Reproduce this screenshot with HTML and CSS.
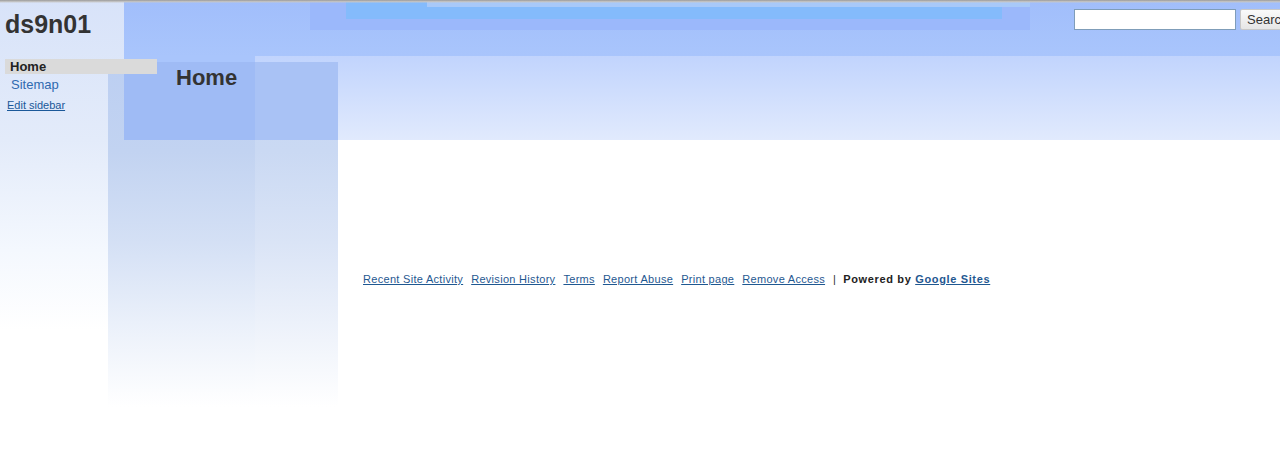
FILE: index.html
```html
<!DOCTYPE html>
<html>
<head>
<meta charset="utf-8">
<link rel="stylesheet" href="styles.css">
</head>
<body>
<div class="page">
  <div class="deco deco-side"></div>
  <div class="deco deco-head"></div>
  <div class="deco deco-head-top"></div>
  <div class="deco deco-sky"></div>
  <div class="deco deco-shine"></div>
  <div class="deco deco-band"></div>
  <div class="deco deco-col"></div>
  <div class="deco deco-col-a"></div>
  <div class="deco deco-col-b"></div>
  <div class="deco deco-topline"></div>

  <header class="header">
    <div class="site-title">ds9n01</div>
    <form class="search">
      <input class="search-input" type="text">
      <button class="search-btn" type="button">Search</button>
    </form>
  </header>

  <div class="main">
    <nav class="sidebar">
      <div class="nav-item nav-current">Home</div>
      <a class="nav-item nav-link" href="#">Sitemap</a>
      <a class="edit-sidebar" href="#">Edit sidebar</a>
    </nav>
    <div class="content">
      <h1 class="page-title">Home</h1>
      <div class="footer">
        <a href="#">Recent Site Activity</a>
        <a href="#">Revision History</a>
        <a href="#">Terms</a>
        <a href="#">Report Abuse</a>
        <a href="#">Print page</a>
        <a href="#">Remove Access</a>
        <span class="sep">|</span>
        <span class="powered">Powered by <a href="#">Google Sites</a></span>
      </div>
    </div>
  </div>
</div>
</body>
</html>
```

FILE: styles.css
```css
html, body {
  margin: 0;
  padding: 0;
  background: #ffffff;
}
.page {
  position: relative;
  width: 1280px;
  height: 462px;
  overflow: hidden;
  font-family: "Liberation Sans", Arial, sans-serif;
  color: #333333;
}
.deco {
  position: absolute;
}
.deco-side {
  left: 0; top: 0; width: 124px; height: 340px;
  background: linear-gradient(to bottom, #d8e3f9 0px, #e3ebfa 140px, #f4f8fe 250px, #ffffff 330px);
}
.deco-head {
  left: 124px; top: 0; width: 1156px; height: 56px;
  background: linear-gradient(to bottom, #a1befb 0px, #a9c5fc 56px);
}
.deco-head-top {
  left: 310px; top: 0; width: 720px; height: 30px;
  background: #9bb8fb;
}
.deco-sky {
  left: 346px; top: 0; width: 656px; height: 19px;
  background: #84bbfc;
}
.deco-shine {
  left: 427px; top: 2px; width: 603px; height: 5px;
  background: #a8c9f9;
}
.deco-band {
  left: 255px; top: 56px; width: 1025px; height: 84px;
  background: linear-gradient(to bottom, #c1d4fd, #e1eafd);
}
.deco-col {
  left: 124px; top: 56px; width: 131px; height: 6px;
  background: #a9c5fc;
}
.deco-col-a {
  left: 108px; top: 62px; width: 147px; height: 345px;
  background: linear-gradient(to bottom, #bccff2 0px, #c2d3f1 90px, #d4e0f5 180px, #eaf0fa 260px, #ffffff 345px);
}
.deco-col-a::before {
  content: "";
  position: absolute;
  left: 16px; top: 0; width: 131px; height: 78px;
  background: #9fbbf5;
}
.deco-col-b {
  left: 255px; top: 62px; width: 83px; height: 345px;
  background: linear-gradient(to bottom, #c6d7f4 0px, #cad9f3 90px, #dae4f6 180px, #ecf1fa 260px, #ffffff 345px);
}
.deco-col-b::before {
  content: "";
  position: absolute;
  left: 0; top: 0; width: 83px; height: 78px;
  background: #a9c2f5;
}
.deco-topline {
  left: 0; top: 0; width: 1280px; height: 3px;
  background: linear-gradient(to bottom, #9a9a9a, #c8c8c8 60%, rgba(200,200,200,0));
}

.header {
  position: relative;
  display: flex;
  justify-content: space-between;
  align-items: flex-start;
  height: 59px;
}
.site-title {
  margin: 10px 0 0 5px;
  font-size: 25px;
  font-weight: bold;
  line-height: 28px;
  color: #333333;
}
.search {
  display: flex;
  gap: 4px;
  margin: 9px 0 0 0;
}
.search-input {
  width: 160px;
  height: 19px;
  margin: 0;
  padding: 0;
  border: 1px solid #7f9db9;
  background: #ffffff;
}
.search-btn {
  margin: 0 -30px 0 0;
  width: 70px;
  height: 21px;
  padding: 0 0 0 6px;
  text-align: left;
  font-family: "Liberation Sans", Arial, sans-serif;
  font-size: 13px;
  color: #333;
  border: 1px solid #c8c8c8;
  border-radius: 2px;
  background: linear-gradient(to bottom, #fafafa, #e6e6e6);
}

.main {
  position: relative;
  display: flex;
}
.sidebar {
  width: 152px;
  margin-left: 5px;
  display: flex;
  flex-direction: column;
  align-items: flex-start;
}
.nav-item {
  display: block;
  font-size: 13px;
  line-height: 15px;
}
.nav-current {
  align-self: stretch;
  background: #dadada;
  font-weight: bold;
  padding-left: 5px;
  color: #222;
}
.nav-link {
  margin-top: 3px;
  padding-left: 6px;
  color: #2f6ab0;
  text-decoration: none;
}
.edit-sidebar {
  margin: 7px 0 0 2px;
  font-size: 11px;
  line-height: 13px;
  color: #1a5899;
}
.content {
  position: relative;
  padding-left: 19px;
  flex: 1;
}
.page-title {
  margin: 6px 0 0 0;
  font-size: 22px;
  line-height: 26px;
  font-weight: bold;
  color: #333333;
}
.footer {
  margin: 181px 0 0 187px;
  display: flex;
  align-items: baseline;
  gap: 8px;
  font-size: 11px;
  line-height: 14px;
  letter-spacing: 0.3px;
  white-space: nowrap;
}
.footer a {
  color: #1f5891;
}
.sep {
  margin: 0 -1px 0 0;
  color: #333;
}
.powered {
  font-weight: bold;
  color: #222;
  letter-spacing: 0.65px;
}
```
